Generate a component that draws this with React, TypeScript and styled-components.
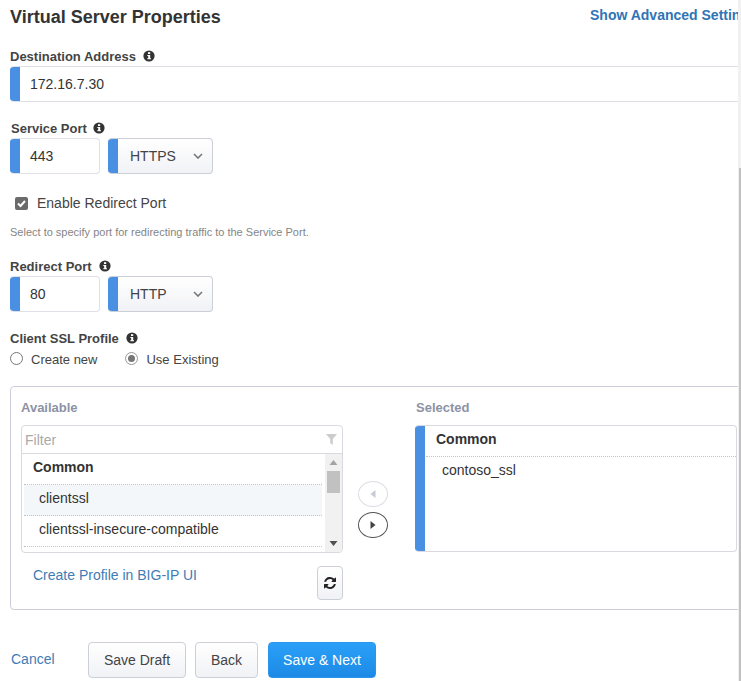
import React from "react";
import styled, { createGlobalStyle } from "styled-components";

const Global = createGlobalStyle`
  html, body { margin: 0; padding: 0; background: #fff; overflow: hidden; }
  body { font-family: "Liberation Sans", Arial, sans-serif; color: #333; }
  * { box-sizing: border-box; }
`;

const Page = styled.div`
  width: 741px;
  height: 681px;
  display: flex;
  overflow: hidden;
`;
const Content = styled.main`
  width: 738px;
  height: 681px;
  overflow: hidden;
  padding: 0 0 0 10px;
`;
const ScrollTrack = styled.div`
  width: 3px;
  height: 681px;
  background: #f1f1f1;
  padding-top: 168px;
`;
const ScrollThumb = styled.div`
  width: 2px;
  margin-left: 1px;
  height: 513px;
  background: #c1c1c1;
`;
const Header = styled.header`
  display: flex;
  justify-content: space-between;
  height: 34px;
`;
const Title = styled.h1`
  margin: 0;
  font-size: 18px;
  line-height: 34px;
  font-weight: 700;
  color: #333;
`;
const AdvancedLink = styled.a`
  font-size: 14px;
  font-weight: 700;
  line-height: 30px;
  color: #2f75b5;
  white-space: nowrap;
  width: 148px;
  overflow: hidden;
`;
const Label = styled.div<{ $top: number; $nudge?: number; $gap?: number }>`
  display: flex;
  align-items: center;
  gap: ${(p) => p.$gap ?? 7}px;
  margin-top: ${(p) => p.$top}px;
  margin-left: ${(p) => p.$nudge ?? 0}px;
  height: 16px;
  font-size: 13px;
  font-weight: 700;
  color: #444;
`;
const FullInput = styled.div`
  margin-top: 2px;
  height: 36px;
  display: flex;
  align-items: center;
  border-top: 1px solid #dfdfe8;
  border-bottom: 1px solid #dfdfe8;
  border-radius: 4px 0 0 4px;
  overflow: hidden;
  font-size: 14px;
  color: #333;
`;
const Bar = styled.span`
  width: 10px;
  align-self: stretch;
  margin: -1px 0;
  background: #4a90e2;
  flex: none;
`;
const FieldText = styled.span`
  padding-left: 10px;
`;
const PortRow = styled.div`
  display: flex;
  gap: 8px;
  margin-top: 2px;
`;
const PortInput = styled.div`
  width: 90px;
  height: 36px;
  display: flex;
  border: 1px solid #dfe0e8;
  border-left: 0;
  border-radius: 4px;
  overflow: hidden;
  font-size: 14px;
  line-height: 34px;
`;
const PortSelect = styled(PortInput)`
  width: 105px;
  position: relative;
  border-color: #ccced8;
  background: linear-gradient(#fff, #f1f2f6);
  color: #444;
  justify-content: space-between;
  align-items: center;
`;
const SelectText = styled.span`
  padding-left: 12px;
  flex: 1;
`;
const Chevron = styled.svg`
  width: 10px;
  height: 6px;
  margin-right: 9px;
`;
const CheckRow = styled.label`
  display: flex;
  align-items: center;
  margin: 21px 0 0 5px;
  height: 16px;
  font-size: 14px;
  gap: 9px;
  color: #444;
`;
const CheckBox = styled.span`
  width: 13px;
  height: 13px;
  border-radius: 2px;
  background: #6b6b6b;
  display: flex;
`;
const Help = styled.div`
  margin-top: 14px;
  height: 14px;
  font-size: 11px;
  line-height: 15px;
  color: #858585;
`;
const RadioRow = styled.div`
  display: flex;
  align-items: center;
  height: 16px;
  margin-top: 5px;
  font-size: 13px;
  color: #444;
`;
const Radio = styled.span<{ $on?: boolean }>`
  width: 13px;
  height: 13px;
  margin-top: -1px;
  border-radius: 50%;
  border: 1px solid ${(p) => (p.$on ? "#999" : "#767676")};
  background: #fff;
  margin-right: 8px;
  display: flex;
  align-items: center;
  justify-content: center;
  &::after {
    content: "";
    width: 7px;
    height: 7px;
    border-radius: 50%;
    background: ${(p) => (p.$on ? "#777" : "transparent")};
  }
`;
const RadioLabel = styled.span`
  margin-right: 28px;
  padding-top: 1px;
`;
const Panel = styled.section`
  margin-top: 19px;
  height: 224px;
  width: 740px;
  border: 1px solid #cdcdd9;
  border-radius: 4px;
  padding: 12px 10px 0;
  display: flex;
`;
const AvailableCol = styled.div`
  width: 322px;
  flex: none;
`;
const ColTitle = styled.div<{ $nudge?: number }>`
  font-size: 13px;
  font-weight: 700;
  line-height: 18px;
  height: 16px;
  padding-left: ${(p) => p.$nudge ?? 0}px;
  color: #8d93a5;
`;
const ListBox = styled.div`
  margin-top: 10px;
  height: 128px;
  border: 1px solid #d9d9df;
  border-radius: 4px;
  overflow: hidden;
`;
const FilterRow = styled.div`
  height: 28px;
  border-bottom: 1px solid #d9d9df;
  display: flex;
  align-items: center;
  justify-content: space-between;
  padding: 0 5px 0 3px;
  font-size: 14px;
  color: #aaa;
`;
const ListBody = styled.div`
  display: flex;
  height: 98px;
`;
const ListItems = styled.div`
  flex: 1;
  padding: 0 3px 0 2px;
  overflow: hidden;
`;
const GroupHead = styled.div`
  height: 31px;
  line-height: 27px;
  padding-left: 9px;
  font-size: 14px;
  font-weight: 700;
  color: #333;
  border-bottom: 1px dotted #c4c4c4;
`;
const Item = styled.div<{ $hl?: boolean }>`
  height: 31px;
  line-height: 27px;
  padding-left: 15px;
  font-size: 14px;
  color: #333;
  background: ${(p) => (p.$hl ? "#f4f7fa" : "#fff")};
  border-bottom: 1px dotted #c4c4c4;
`;
const VScroll = styled.div`
  width: 17px;
  background: #f1f1f1;
  display: flex;
  flex-direction: column;
  align-items: center;
`;
const ScrollArrow = styled.svg`
  width: 17px;
  height: 17px;
  flex: none;
`;
const VThumb = styled.div`
  width: 13px;
  height: 22px;
  background: #c1c1c1;
  flex: none;
`;
const VSpacer = styled.div`
  flex: 1;
`;
const BelowList = styled.div`
  display: flex;
  justify-content: space-between;
  margin-top: 13px;
`;
const CreateLink = styled.a`
  font-size: 14px;
  color: #3f7cb5;
  padding-left: 12px;
  line-height: 18px;
`;
const RefreshButton = styled.button`
  width: 26px;
  height: 34px;
  padding: 0;
  display: flex;
  align-items: center;
  justify-content: center;
  border: 1px solid #ccced8;
  border-radius: 4px;
  background: linear-gradient(#fff, #f1f2f6);
`;
const Arrows = styled.div`
  width: 72px;
  flex: none;
  display: flex;
  flex-direction: column;
  align-items: center;
  gap: 5px;
  padding-top: 82px;
  padding-right: 13px;
`;
const ArrowButton = styled.button<{ $off?: boolean }>`
  width: 30px;
  height: 26px;
  border-radius: 50%;
  padding: 0;
  background: #fff;
  border: 1px solid ${(p) => (p.$off ? "#dcdce4" : "#555")};
  display: flex;
  align-items: center;
  justify-content: center;
`;
const SelectedCol = styled.div`
  width: 322px;
  flex: none;
`;
const SelectedBox = styled.div`
  margin-top: 10px;
  height: 127px;
  display: flex;
  border: 1px solid #d9d9df;
  border-left: 0;
  border-radius: 4px;
  overflow: hidden;
`;
const SelectedBody = styled.div`
  flex: 1;
  padding-left: 1px;
`;
const SelectedHead = styled.div`
  height: 31px;
  line-height: 26px;
  padding-left: 10px;
  font-size: 14px;
  font-weight: 700;
  color: #333;
  border-bottom: 1px dotted #c4c4c4;
`;
const SelectedItem = styled.div`
  padding-left: 16px;
  font-size: 14px;
  line-height: 26px;
  color: #333;
`;
const Footer = styled.footer`
  display: flex;
  align-items: center;
  margin-top: 32px;
  height: 36px;
`;
const CancelLink = styled.a`
  width: 77px;
  margin-left: 1px;
  font-size: 14px;
  color: #3f7cb5;
  margin-top: -2px;
`;
const Btn = styled.button<{ $w: number; $gap?: number }>`
  width: ${(p) => p.$w}px;
  height: 36px;
  padding: 0;
  margin-right: ${(p) => p.$gap ?? 9}px;
  border: 1px solid #ccced8;
  border-radius: 4px;
  background: linear-gradient(#fff, #f1f2f6);
  font: 14px "Liberation Sans", Arial, sans-serif;
  color: #444;
`;
const PrimaryBtn = styled(Btn)`
  border: 1px solid #2a95ec;
  background: linear-gradient(#2ba0f8, #1b8ae6);
  color: #fff;
`;

const Info = () => (
  <svg width="12" height="12" viewBox="0 0 12 12">
    <circle cx="6" cy="6" r="5.6" fill="#333" />
    <rect x="5" y="2.2" width="2.2" height="1.8" fill="#fff" />
    <path d="M4.3 5h2.9v3.3h.8v1H4.3v-1h.9V6h-.9z" fill="#fff" />
  </svg>
);
const Caret = ({ left, color }: { left?: boolean; color: string }) => (
  <svg width="6" height="8" viewBox="0 0 6 8">
    <path d={left ? "M5.5 0v8L0.5 4z" : "M.5 0v8l5-4z"} fill={color} />
  </svg>
);

export default function App() {
  return (
    <Page>
      <Global />
      <Content>
        <Header>
          <Title>Virtual Server Properties</Title>
          <AdvancedLink>Show Advanced Settings</AdvancedLink>
        </Header>
        <Label $top={14}>Destination Address <Info /></Label>
        <FullInput><Bar /><FieldText>172.16.7.30</FieldText></FullInput>
        <Label $top={18} $nudge={1} $gap={6}>Service Port <Info /></Label>
        <PortRow>
          <PortInput><Bar /><FieldText>443</FieldText></PortInput>
          <PortSelect>
            <Bar />
            <SelectText>HTTPS</SelectText>
            <Chevron viewBox="0 0 10 6"><path d="M1 1l4 4 4-4" fill="none" stroke="#777" strokeWidth="1.6" /></Chevron>
          </PortSelect>
        </PortRow>
        <CheckRow>
          <CheckBox>
            <svg width="13" height="13" viewBox="0 0 13 13"><path d="M3 6.500l2.500 2.500L10 4" fill="none" stroke="#fff" strokeWidth="2" /></svg>
          </CheckBox>
          Enable Redirect Port
        </CheckRow>
        <Help>Select to specify port for redirecting traffic to the Service Port.</Help>
        <Label $top={19}>Redirect Port <Info /></Label>
        <PortRow>
          <PortInput><Bar /><FieldText>80</FieldText></PortInput>
          <PortSelect>
            <Bar />
            <SelectText>HTTP</SelectText>
            <Chevron viewBox="0 0 10 6"><path d="M1 1l4 4 4-4" fill="none" stroke="#777" strokeWidth="1.6" /></Chevron>
          </PortSelect>
        </PortRow>
        <Label $top={18}>Client SSL Profile <Info /></Label>
        <RadioRow>
          <Radio /><RadioLabel>Create new</RadioLabel>
          <Radio $on /><RadioLabel>Use Existing</RadioLabel>
        </RadioRow>
        <Panel>
          <AvailableCol>
            <ColTitle>Available</ColTitle>
            <ListBox>
              <FilterRow>
                Filter
                <svg width="11" height="11" viewBox="0 0 11 11"><path d="M0 0h11L6.800 5v6L4.200 9V5z" fill="#ccc" /></svg>
              </FilterRow>
              <ListBody>
                <ListItems>
                  <GroupHead>Common</GroupHead>
                  <Item $hl>clientssl</Item>
                  <Item>clientssl-insecure-compatible</Item>
                </ListItems>
                <VScroll>
                  <ScrollArrow viewBox="0 0 17 17"><path d="M8.500 6l4 5h-8z" fill="#a3a3a3" /></ScrollArrow>
                  <VThumb />
                  <VSpacer />
                  <ScrollArrow viewBox="0 0 17 17"><path d="M8.500 11l-4-5h8z" fill="#505050" /></ScrollArrow>
                </VScroll>
              </ListBody>
            </ListBox>
            <BelowList>
              <CreateLink>Create Profile in BIG-IP UI</CreateLink>
              <RefreshButton>
                <svg width="12" height="12" viewBox="0 0 1536 1536"><path d="M1511 928q0 5-1 7-64 268-268 434.500T764 1536q-146 0-282.500-55T238 1324L109 1453q-19 19-45 19t-45-19-19-45V960q0-26 19-45t45-19h448q26 0 45 19t19 45-19 45L420 1142q71 66 161 102t187 36q134 0 250-65t186-179q11-17 53-117 8-23 30-23h192q13 0 22.500 9.500t9.500 22.500zM1536 128v448q0 26-19 45t-45 19h-448q-26 0-45-19t-19-45 19-45l138-138q-148-137-349-137-134 0-250 65T332 480q-11 17-53 117-8 23-30 23H50q-13 0-22.500-9.500T18 588v-7q65-268 270-434.500T768 0q146 0 284 55.500T1297 212l130-129q19-19 45-19t45 19 19 45z" fill="#222" /></svg>
              </RefreshButton>
            </BelowList>
          </AvailableCol>
          <Arrows>
            <ArrowButton $off><Caret left color="#c5cad6" /></ArrowButton>
            <ArrowButton><Caret color="#444" /></ArrowButton>
          </Arrows>
          <SelectedCol>
            <ColTitle $nudge={1}>Selected</ColTitle>
            <SelectedBox>
              <Bar />
              <SelectedBody>
                <SelectedHead>Common</SelectedHead>
                <SelectedItem>contoso_ssl</SelectedItem>
              </SelectedBody>
            </SelectedBox>
          </SelectedCol>
        </Panel>
        <Footer>
          <CancelLink>Cancel</CancelLink>
          <Btn $w={98}>Save Draft</Btn>
          <Btn $w={63} $gap={10}>Back</Btn>
          <PrimaryBtn $w={108}>Save &amp; Next</PrimaryBtn>
        </Footer>
      </Content>
      <ScrollTrack><ScrollThumb /></ScrollTrack>
    </Page>
  );
}
